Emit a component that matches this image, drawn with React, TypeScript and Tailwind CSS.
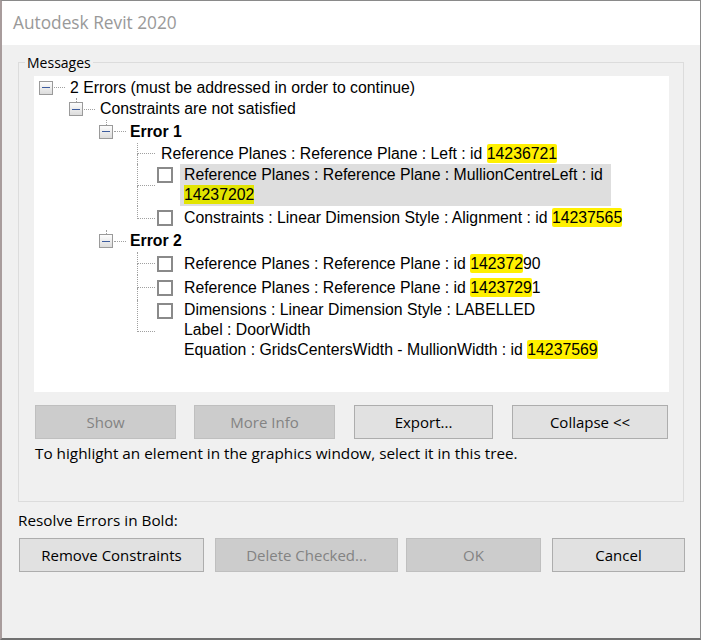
import React from 'react';

const ui = "font-['Open_Sans','Noto_Sans',sans-serif]";
const tree = "font-['Liberation_Sans',Arial,sans-serif]";

const Expander = ({ stub }: { stub?: boolean }) => (
  <div className="flex w-[14px] shrink-0 flex-col items-center self-stretch">
    <div className={stub ? 'w-0 flex-1 border-l border-dotted border-[#a0a0a0]' : 'flex-1'} />
    <div className="flex h-[14px] w-[14px] items-center justify-center border border-[#9a9a9a] bg-gradient-to-b from-[#fdfdfd] to-[#dcdcdc]">
      <div className="h-px w-[8px] bg-[#3d5c9e]" />
    </div>
    <div className="flex-1" />
  </div>
);

const Branch = ({ last }: { last?: boolean }) => (
  <div className="flex w-[18px] shrink-0 flex-col self-stretch">
    <div className="flex-1 border-b border-l border-dotted border-[#a0a0a0]" />
    <div className={last ? 'flex-1' : 'flex-1 border-l border-dotted border-[#a0a0a0]'} />
  </div>
);

const Check = ({ top }: { top?: boolean }) => (
  <div
    className={
      top
        ? 'ml-[2px] mt-[3px] h-4 w-4 shrink-0 self-start border-2 border-[#8a8a8a] bg-white'
        : 'ml-[2px] h-4 w-4 shrink-0 border-2 border-[#8a8a8a] bg-white'
    }
  />
);

const Mark = ({ children }: { children: React.ReactNode }) => (
  <span className="rounded-[2px] bg-[#fff000] py-[1px]">{children}</span>
);

const Btn = ({ label, disabled, className }: { label: string; disabled?: boolean; className: string }) => (
  <div
    className={`${className} flex h-[34px] items-center justify-center border text-[15px] ${
      disabled ? 'border-[#bfbfbf] bg-[#cccccc] text-[#838383]' : 'border-[#adadad] bg-[#e1e1e1] text-black'
    }`}
  >
    {label}
  </div>
);

export default function App() {
  return (
    <div className={`${ui} flex h-[640px] w-[701px] flex-col overflow-hidden border-t border-r border-b-2 border-l-2 border-t-[#8a8a8a] border-r-[#8a8a8a] border-b-[#707070] border-l-[#a89c9c] bg-[#f0f0f0]`}>
      {/* title bar */}
      <div className="flex h-[44px] shrink-0 items-center bg-white pl-[11px] text-[17.3px] text-[#999999]">
        Autodesk Revit 2020
      </div>

      <div className="flex flex-1 flex-col">
        {/* Messages group */}
        <div className="ml-[16px] mt-[17px] flex h-[440px] w-[666px] flex-col border border-[#dcdcdc]">
          <div className="-mt-[10px] ml-[6px] w-fit bg-[#f0f0f0] px-[2px] text-[14px] leading-[20px] text-black">
            Messages
          </div>

          <div className={`${tree} ml-[15px] mt-[3px] flex h-[316px] w-[635px] flex-col bg-white pt-[1px] text-[15.8px] leading-[20px] text-black`}>
            <div className="flex h-[21px] items-center pl-[5px]">
              <Expander />
              <div className="ml-[1px] w-[11px] border-t border-dotted border-[#a0a0a0]" />
              <span className="ml-[5px]">2 Errors (must be addressed in order to continue)</span>
            </div>
            <div className="flex h-[22px] items-center pl-[35px]">
              <Expander stub />
              <div className="ml-[1px] w-[11px] border-t border-dotted border-[#a0a0a0]" />
              <span className="ml-[5px]">Constraints are not satisfied</span>
            </div>

            <div className="flex h-[23px] items-center pl-[65px]">
              <Expander stub />
              <div className="ml-[1px] w-[12px] border-t border-dotted border-[#a0a0a0]" />
              <span className="ml-[4px] font-bold">Error 1</span>
            </div>
            <div className="flex h-[21px] items-center pl-[103px]">
              <Branch />
              <span className="ml-[6px]">
                Reference Planes : Reference Plane : Left : id <Mark>14236721</Mark>
              </span>
            </div>
            <div className="flex h-[42px] items-center pl-[103px]">
              <Branch />
              <Check top />
              <div className="ml-[7px] h-[42px] w-[431px] bg-[#dedede] px-[4px] py-[1px]">
                Reference Planes : Reference Plane : MullionCentreLeft : id
                <br />
                <span className="bg-[#e2e400] py-[1px]">14237202</span>
              </div>
            </div>
            <div className="flex h-[24px] items-center pl-[103px]">
              <Branch last />
              <Check />
              <span className="ml-[11px]">
                Constraints : Linear Dimension Style : Alignment : id <Mark>14237565</Mark>
              </span>
            </div>

            <div className="flex h-[22px] items-center pl-[65px]">
              <Expander stub />
              <div className="ml-[1px] w-[12px] border-t border-dotted border-[#a0a0a0]" />
              <span className="ml-[4px] font-bold">Error 2</span>
            </div>
            <div className="flex h-[23px] items-center pl-[103px]">
              <Branch />
              <Check />
              <span className="ml-[11px]">
                Reference Planes : Reference Plane : id <Mark>142372</Mark>90
              </span>
            </div>
            <div className="flex h-[25px] items-center pl-[103px]">
              <Branch />
              <Check />
              <span className="ml-[11px]">
                Reference Planes : Reference Plane : id <Mark>1423729</Mark>1
              </span>
            </div>
            <div className="flex h-[62px] items-center pl-[103px]">
              <Branch last />
              <Check top />
              <div className="ml-[11px] self-start">
                <div>Dimensions : Linear Dimension Style : LABELLED</div>
                <div>Label : DoorWidth</div>
                <div>
                  Equation : GridsCentersWidth - MullionWidth : id <Mark>14237569</Mark>
                </div>
              </div>
            </div>
          </div>

          <div className="mt-[13px] flex">
            <Btn label="Show" disabled className="ml-[16px] w-[141px]" />
            <Btn label="More Info" disabled className="ml-[18px] w-[141px]" />
            <Btn label="Export..." className="ml-[19px] w-[139px]" />
            <Btn label="Collapse <<" className="ml-[19px] w-[156px]" />
          </div>
          <div className="ml-[16px] mt-[4px] text-[15.3px] leading-[20px] text-black">
            To highlight an element in the graphics window, select it in this tree.
          </div>
        </div>

        <div className="ml-[16px] mt-[8px] text-[15.3px] leading-[20px] text-black">Resolve Errors in Bold:</div>

        <div className="mt-[8px] flex">
          <Btn label="Remove Constraints" className="ml-[17px] w-[185px]" />
          <Btn label="Delete Checked..." disabled className="ml-[11px] w-[183px]" />
          <Btn label="OK" disabled className="ml-[8px] w-[135px]" />
          <Btn label="Cancel" className="ml-[11px] w-[133px]" />
        </div>
      </div>
    </div>
  );
}
